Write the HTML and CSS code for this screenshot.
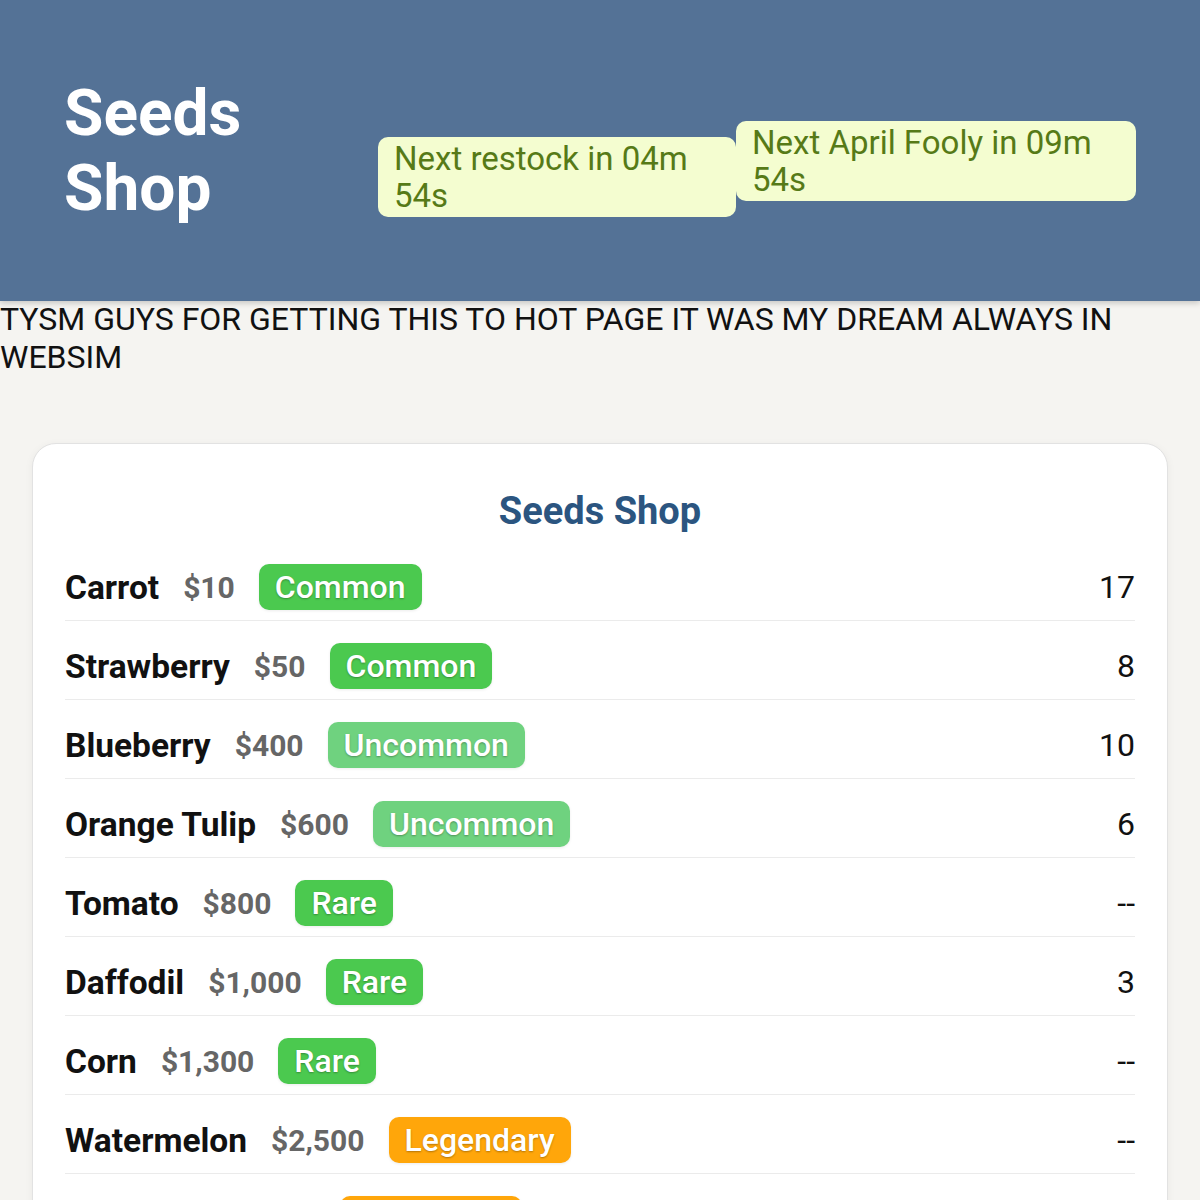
FILE: index.html
```html
<!DOCTYPE html>
<html lang="en">
<head>
  <meta charset="UTF-8">
  <title>Seeds Shop</title>
  <link rel="stylesheet" href="styles.css">
</head>
<body>

  <header class="top">
    <h1>Seeds Shop</h1>
    <div class="timers">
      <div class="timer restock">Next restock in 04m 54s</div>
      <div class="timer">Next April Fooly in 09m 54s</div>
    </div>
  </header>

  <p class="note">TYSM GUYS FOR GETTING THIS TO HOT PAGE IT WAS MY DREAM ALWAYS IN WEBSIM</p>

  <div class="shop">
    <h2>Seeds Shop</h2>

    <div class="item">
      <div class="info"><span class="name">Carrot</span><span class="price">$10</span><span class="tag common">Common</span></div>
      <span class="stock">17</span>
    </div>
    <div class="item">
      <div class="info"><span class="name">Strawberry</span><span class="price">$50</span><span class="tag common">Common</span></div>
      <span class="stock">8</span>
    </div>
    <div class="item">
      <div class="info"><span class="name">Blueberry</span><span class="price">$400</span><span class="tag uncommon">Uncommon</span></div>
      <span class="stock">10</span>
    </div>
    <div class="item">
      <div class="info"><span class="name">Orange Tulip</span><span class="price">$600</span><span class="tag uncommon">Uncommon</span></div>
      <span class="stock">6</span>
    </div>
    <div class="item">
      <div class="info"><span class="name">Tomato</span><span class="price">$800</span><span class="tag rare">Rare</span></div>
      <span class="stock">--</span>
    </div>
    <div class="item">
      <div class="info"><span class="name">Daffodil</span><span class="price">$1,000</span><span class="tag rare">Rare</span></div>
      <span class="stock">3</span>
    </div>
    <div class="item">
      <div class="info"><span class="name">Corn</span><span class="price">$1,300</span><span class="tag rare">Rare</span></div>
      <span class="stock">--</span>
    </div>
    <div class="item">
      <div class="info"><span class="name">Watermelon</span><span class="price">$2,500</span><span class="tag legendary">Legendary</span></div>
      <span class="stock">--</span>
    </div>
    <div class="item">
      <div class="info"><span class="name">Pumpkin</span><span class="price">$3,000</span><span class="tag legendary">Legendary</span></div>
      <span class="stock">--</span>
    </div>
    <div class="item">
      <div class="info"><span class="name">Apple</span><span class="price">$3,250</span><span class="tag legendary">Legendary</span></div>
      <span class="stock">--</span>
    </div>
  </div>

</body>
</html>
```

FILE: styles.css
```css
body {
  margin: 0;
  font-family: Roboto, "Liberation Sans", sans-serif;
  background: #f5f4f1;
  color: #111;
}

.top {
  display: flex;
  align-items: center;
  height: 301px;
  padding: 0 64px;
  background: #547296;
  box-shadow: 0 2px 6px rgba(0, 0, 0, 0.2);
}
.top h1 {
  flex: 1;
  margin: 0;
  font-size: 64px;
  font-weight: 700;
  color: #fff;
}
.timers { display: flex; align-items: flex-start; margin-top: 36px; }
.timer {
  width: 326px;
  padding: 3px 16px;
  font-size: 33px;
  line-height: 37px;
  color: #567a17;
  background: #f4fdd0;
  border-radius: 10px;
}
.timer.restock { margin-top: 16px; }
.timer + .timer { width: 368px; }

.note {
  margin: 0;
  font-size: 32px;
  line-height: 37.5px;
}

.shop {
  margin: 67px 32px 40px;
  padding: 45px 32px 20px;
  background: #fff;
  border: 1px solid #e2e2e2;
  border-radius: 24px;
  box-shadow: 0 2px 8px rgba(0, 0, 0, 0.05);
}
.shop h2 {
  margin: 0 0 9px;
  text-align: center;
  font-size: 38px;
  color: #2b5580;
}

.item {
  display: flex;
  align-items: center;
  justify-content: space-between;
  padding: 22px 0 10px;
  border-bottom: 1px solid #ebebeb;
}
.info { display: flex; align-items: center; gap: 24px; }
.name { font-size: 33.5px; font-weight: 700; }
.price { font-size: 30px; font-weight: 700; color: #666; }
.tag {
  padding: 4px 16px;
  font-size: 32px;
  font-weight: 500;
  color: #fff;
  border-radius: 10px;
  text-shadow: 0 1px 2px rgba(0, 0, 0, 0.3);
  box-shadow: 0 1px 3px rgba(0, 0, 0, 0.08);
}
.common { background: #4bc94f; }
.uncommon { background: #6fd27f; }
.rare { background: #4bc94f; }
.legendary { background: #ffa60a; }
.stock { font-size: 32px; }
```
